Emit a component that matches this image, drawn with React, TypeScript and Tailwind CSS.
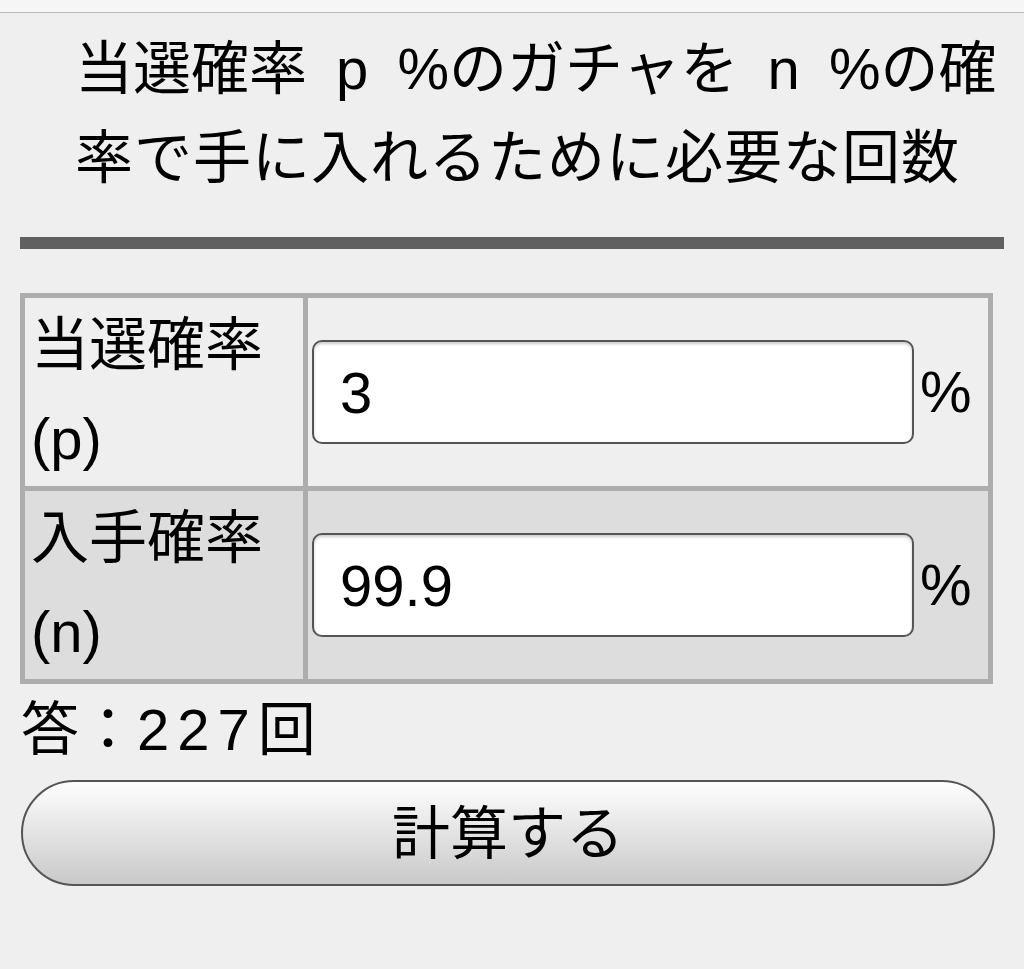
import React from 'react';

const font = 'font-["Liberation_Sans","Noto_Sans_CJK_JP",sans-serif]';

interface RowProps {
  label: string;
  sub: string;
  value: string;
  shade: string;
}

const Row: React.FC<RowProps> = ({ label, sub, value, shade }) => {
  return (
    <>
      <div className={`${shade} pl-[6px] leading-[94px] text-[58px] text-black`}>
        {label}
        <br />
        {sub}
      </div>
      <div className={`${shade} flex items-center pl-[4px]`}>
        <input
          type="text"
          defaultValue={value}
          className={`${font} w-[602px] h-[104px] rounded-[10px] border-2 border-[#555] bg-white pl-[26px] text-[58px] text-black shadow-[inset_0_2px_3px_rgba(0,0,0,0.2)] outline-none`}
        />
        <span className="ml-[6px] text-[58px] leading-none text-black">%</span>
      </div>
    </>
  );
};

export default function App() {
  return (
    <div className={`${font} min-h-[969px] w-[1024px] bg-[#efefef] text-black`}>
      <div className="h-[13px] border-b border-[#b9b9b9] bg-[#f6f6f6]" />

      <div className="px-[20px]">
        <h1 className="mt-[11px] pl-[55px] text-[58px] font-normal leading-[89px] [word-spacing:13px]">
          当選確率 p %のガチャを n %の確
          <br />
          <span className="tracking-[1px]">率で手に入れるために必要な回数</span>
        </h1>

        <div className="mt-[35px] h-[12px] w-[984px] bg-[#606060]" />

        <div className="mt-[44px] grid w-[973px] grid-cols-[278px_1fr] gap-[5px] bg-[#adadad] p-[5px]">
          <Row label="当選確率" sub="(p)" value="3" shade="bg-[#efefef]" />
          <Row label="入手確率" sub="(n)" value="99.9" shade="bg-[#dddddd]" />
        </div>

        <div className="pl-[1px] text-[58px] leading-[92px]">
          答：<span className="tracking-[8px]">227</span>回
        </div>

        <button
          type="button"
          className={`${font} ml-[1px] mt-[4px] flex h-[106px] w-[974px] items-center justify-center rounded-full border-2 border-[#555] bg-gradient-to-b from-[#fefefe] to-[#c9c9c9] text-[58px] text-black`}
        >
          計算する
        </button>
      </div>
    </div>
  );
}
